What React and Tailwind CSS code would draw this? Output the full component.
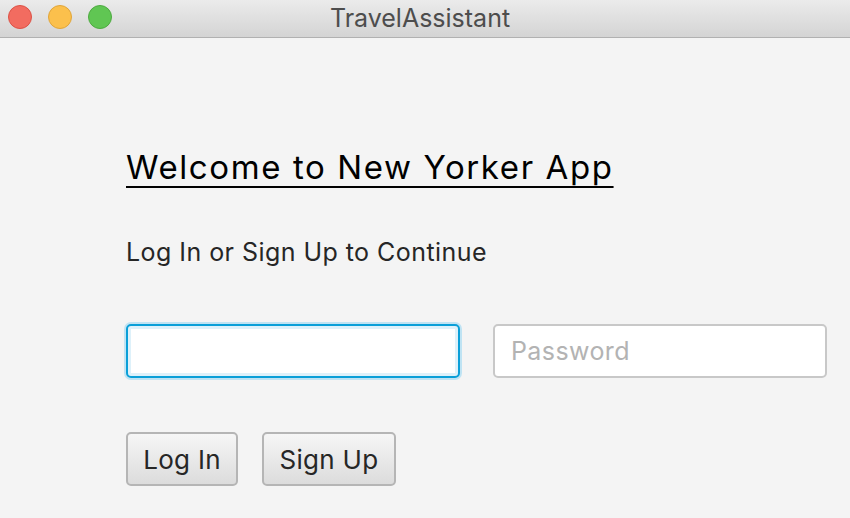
export default function App() {
  const font = { fontFamily: 'Inter, "Noto Sans", sans-serif' };
  return (
    <div className="w-[850px] h-[518px] flex flex-col bg-[#f4f4f4] overflow-hidden" style={font}>
      <div className="h-[38px] shrink-0 relative flex items-center justify-center bg-gradient-to-b from-[#ebebeb] to-[#d4d4d4] border-b border-[#b1b1b1]">
        <div className="absolute left-[8px] top-[5px] flex gap-[16px]">
          <div className="w-[24px] h-[24px] rounded-full bg-[#f26c60] border border-[#dc5246]" />
          <div className="w-[24px] h-[24px] rounded-full bg-[#fbc04c] border border-[#e0a53a]" />
          <div className="w-[24px] h-[24px] rounded-full bg-[#60c653] border border-[#4eaa41]" />
        </div>
        <span className="text-[25px] text-[#4d4d4d] leading-none pr-[10px]">TravelAssistant</span>
      </div>
      <div className="flex flex-col pl-[126px] pt-[109px]">
        <h1 className="text-[33px] leading-[40px] tracking-[1.6px] text-black underline underline-offset-[7px] decoration-[2px] self-start">
          Welcome to New Yorker App
        </h1>
        <p className="mt-[50px] text-[25px] leading-[30px] tracking-[0.45px] text-[#262626]">Log In or Sign Up to Continue</p>
        <div className="mt-[57px] flex gap-[33px]">
          <input
            className="w-[334px] h-[54px] bg-white rounded-[5px] border-2 border-[#0a9fd8] shadow-[0_0_0_2px_#bfe3f3,inset_0_0_0_3px_#def1fa] outline-none px-[16px] text-[25px]"
          />
          <input
            placeholder="Password"
            className="w-[334px] h-[54px] bg-white rounded-[5px] border-2 border-[#c8c8c8] outline-none px-[16px] text-[25px] tracking-[0.4px] placeholder:text-[#b3b3b3]"
          />
        </div>
        <div className="mt-[54px] flex gap-[24px]">
          <button className="w-[112px] h-[54px] rounded-[5px] border-2 border-[#b5b5b5] bg-gradient-to-b from-[#f6f6f6] to-[#dcdcdc] text-[26px] tracking-[0.3px] text-[#262626]">
            Log In
          </button>
          <button className="w-[134px] h-[54px] rounded-[5px] border-2 border-[#b5b5b5] bg-gradient-to-b from-[#f6f6f6] to-[#dcdcdc] text-[26px] tracking-[0.3px] text-[#262626]">
            Sign Up
          </button>
        </div>
      </div>
    </div>
  );
}
